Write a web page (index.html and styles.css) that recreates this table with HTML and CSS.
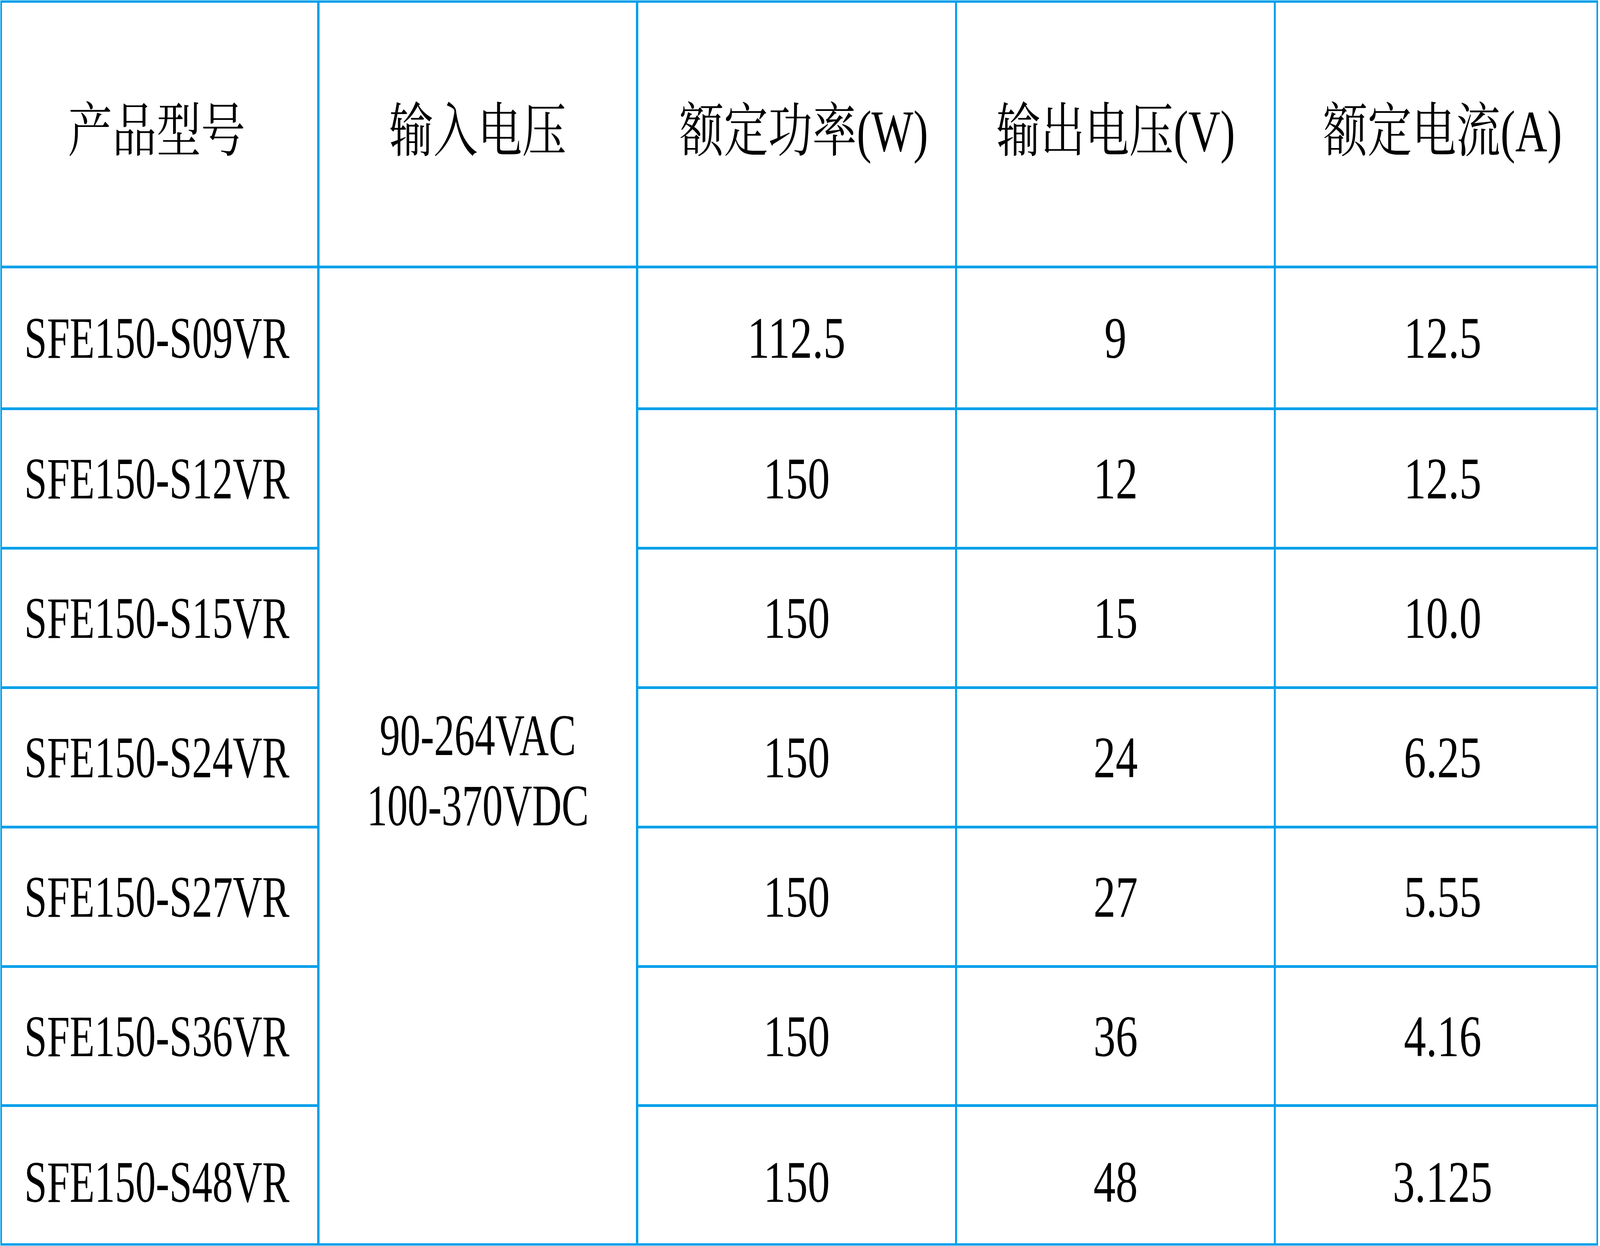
FILE: index.html
```html
<!DOCTYPE html>
<html lang="zh-CN">
<head>
<meta charset="utf-8">
<title>SFE150 系列</title>
<link rel="stylesheet" href="styles.css">
</head>
<body>
<div class="sheet">
  <div class="cell head model"><span class="txt">产品型号</span></div>
  <div class="cell head"><span class="txt">输入电压</span></div>
  <div class="cell head power"><span class="txt">额定功率(W)</span></div>
  <div class="cell head"><span class="txt">输出电压(V)</span></div>
  <div class="cell head cur"><span class="txt">额定电流(A)</span></div>

  <div class="cell model"><span class="txt narrow">SFE150-S09VR</span></div>
  <div class="cell input"><span class="txt narrow">90-264VAC<br>100-370VDC</span></div>
  <div class="cell"><span class="txt">112.5</span></div>
  <div class="cell"><span class="txt">9</span></div>
  <div class="cell cur"><span class="txt">12.5</span></div>

  <div class="cell model"><span class="txt narrow">SFE150-S12VR</span></div>
  <div class="cell"><span class="txt">150</span></div>
  <div class="cell"><span class="txt">12</span></div>
  <div class="cell cur"><span class="txt">12.5</span></div>

  <div class="cell model"><span class="txt narrow">SFE150-S15VR</span></div>
  <div class="cell"><span class="txt">150</span></div>
  <div class="cell"><span class="txt">15</span></div>
  <div class="cell cur"><span class="txt">10.0</span></div>

  <div class="cell model"><span class="txt narrow">SFE150-S24VR</span></div>
  <div class="cell"><span class="txt">150</span></div>
  <div class="cell"><span class="txt">24</span></div>
  <div class="cell cur"><span class="txt">6.25</span></div>

  <div class="cell model"><span class="txt narrow">SFE150-S27VR</span></div>
  <div class="cell"><span class="txt">150</span></div>
  <div class="cell"><span class="txt">27</span></div>
  <div class="cell cur"><span class="txt">5.55</span></div>

  <div class="cell model"><span class="txt narrow">SFE150-S36VR</span></div>
  <div class="cell"><span class="txt">150</span></div>
  <div class="cell"><span class="txt">36</span></div>
  <div class="cell cur"><span class="txt">4.16</span></div>

  <div class="cell model last"><span class="txt narrow">SFE150-S48VR</span></div>
  <div class="cell last"><span class="txt">150</span></div>
  <div class="cell last"><span class="txt">48</span></div>
  <div class="cell cur last"><span class="txt">3.125</span></div>
</div>
<script src="script.js"></script>
</body>
</html>
```

FILE: styles.css
```css
:root {
  --ux: calc(100vw / 5416);
  --uy: calc(100vh / 3190);
  --sx: 1;
}

html, body {
  margin: 0;
  padding: 0;
  background: #ffffff;
  overflow: hidden;
}

body {
  padding: calc(1 * var(--uy)) 0 0 calc(1 * var(--ux));
}

.sheet {
  display: grid;
  width: calc(5409 * var(--ux));
  box-sizing: border-box;
  grid-template-columns:
    calc(1067 * var(--ux))
    calc(1072 * var(--ux))
    calc(1073 * var(--ux))
    calc(1072 * var(--ux))
    calc(1085 * var(--ux));
  grid-template-rows:
    calc(673 * var(--uy))
    calc(356 * var(--uy))
    calc(350 * var(--uy))
    calc(350 * var(--uy))
    calc(350 * var(--uy))
    calc(350 * var(--uy))
    calc(349 * var(--uy))
    calc(349 * var(--uy));
  column-gap: calc(7 * var(--ux));
  row-gap: calc(7 * var(--uy));
  padding: calc(6 * var(--uy)) calc(6 * var(--ux));
  background: #00a0e9;
}

.cell {
  display: flex;
  align-items: center;
  justify-content: center;
  text-align: center;
  background: #ffffff;
  color: #000000;
  font-family: "Liberation Serif", "Noto Serif CJK SC", "Noto Sans CJK SC", serif;
  font-size: calc(150 * var(--uy));
  line-height: 1.2;
  white-space: nowrap;
  min-width: 0;
}

.txt {
  display: inline-block;
  flex: none;
  transform: scaleX(var(--sx));
}

.txt.narrow {
  transform: scaleX(calc(var(--sx) * 0.92));
}

.head {
  padding-bottom: calc(16 * var(--uy));
}

.model {
  padding-right: calc(20 * var(--ux));
}

.power.head {
  padding-left: calc(50 * var(--ux));
}

.cur {
  padding-left: calc(44 * var(--ux));
}

.input {
  grid-column: 2;
  grid-row: 2 / span 7;
  padding-top: calc(74 * var(--uy));
}

.last {
  padding-top: calc(34 * var(--uy));
}
```

FILE: script.js
```js
(function () {
  var sx = (window.innerWidth / 5416) / (window.innerHeight / 3190);
  document.documentElement.style.setProperty('--sx', String(sx));
})();
```
